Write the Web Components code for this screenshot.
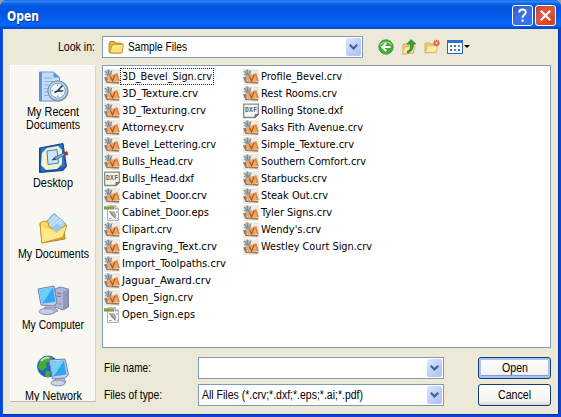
<!DOCTYPE html>
<html lang="en">
<head>
<meta charset="utf-8">
<title>Open</title>
<style>
html,body{margin:0;height:100%;overflow:hidden;background:#9a9e9c}
body{font:12px/14px "Liberation Sans",sans-serif;color:#000}
</style>
</head>
<body>
<open-dialog></open-dialog>
<script>
const define=(name,html,setup)=>customElements.define(name,class extends HTMLElement{
  connectedCallback(){
    if(this.shadowRoot)return;
    this.attachShadow({mode:'open'}).innerHTML=typeof html==='function'?html(this):html;
    if(setup)setup(this);
  }
});

// A single line of text, condensed or widened to an exact width.
define('fit-text','<style>:host{display:inline-block;white-space:pre}span{display:inline-block;transform-origin:0 50%}</style><span><slot></slot></span>',el=>{
  const w=+el.getAttribute('w'),s=el.shadowRoot.querySelector('span');
  const now=s.getBoundingClientRect().width;
  el.style.width=w+'px';
  s.style.transform=`scaleX(${w/now})`;
});

const icons={
folder:['0 0 16 16',`<path d="M1 4.5V13l1 1h11.5l1-1.5V5L13 4H8L6.5 2.5H2z" fill="#e7b53c" stroke="#a97e1c" stroke-width=".8"/><path d="M2 12.5 4 6.2 15.4 5.5 14.3 13 13 14H2.5z" fill="#fbe37b" stroke="#b78c25" stroke-width=".8"/><path d="M4.7 7.2 14 6.6" stroke="#fff8c4"/>`],
crv:['0 0 16 16',`<path d="M0 0h16v16H0z" fill="#efebe0"/><path d="M0 8.5 4 7.500l-.5 5 12 .5-1 1.700L2.500 14z" fill="#8f7d6a"/><path d="M2.500 7.500 13.300 4.200 15.700 12 5.500 13.500z" fill="#f3a461"/><path d="m13.300 4.200 2.400 7.800-1.500.200L11.500 4.800z" fill="#dd8847"/><path d="m6.300 7.500 2.300 4.300L11 5.800" fill="none" stroke="#a45a1e" stroke-width="1.200"/><path d="m.5 2.500 4 5.300 3.500-1.500L7.500 2 4.500.500z" fill="#b0b6b8"/><path d="m.8 2 3.700 4M4 .5l1 6M8 1.500 5.500 7M1 5.500l3 1" stroke="#6f7f88" stroke-width=".9"/>`],
dxf:['0 0 16 16',`<path d="M.7 1.200h14.600v10.300l-3.300 3H.7z" fill="#f3f3f0" stroke="#858989" stroke-width="1.300"/><path d="M12 14.500v-3h3.300z" fill="#999" stroke="#666"/><text x="2" y="8.800" font-size="6.300" font-weight="bold" textLength="12" font-family="Liberation Mono,monospace" fill="#626262">DXF</text>`],
eps:['0 0 16 16',`<path d="M3.500.700h7.800l3.200 3v11.800h-11z" fill="#fafafa" stroke="#999" stroke-width=".8"/><path d="M11 .700v3.100h3.500" fill="#ddd" stroke="#777" stroke-width=".7"/><path d="M0 1h10v3.600H0z" fill="#80a044"/><path d="M0 1.500h10" stroke="#a8bf72"/><path d="m5 6 5.500.500 2 4-1.500 3-3.500-3z" fill="#a8a8a8"/><path d="m5.500 6.500 6 7M5 13.500h2.500M13 6v2M13 13.500h.8" stroke="#777" stroke-width=".8"/>`],
back:['0 0 16 16',`<circle cx="8" cy="8" r="7.2" fill="#43ad39" stroke="#3c8c34" stroke-width=".8"/><path d="M2.5 6a6 5 0 0 1 11 0" fill="none" stroke="#9bdd86" stroke-width="1.2"/><path d="M8.2 4 4.2 8l4 4M4.5 8h8" fill="none" stroke="#fff" stroke-width="2"/>`],
up:['0 0 16 16',`<path d="M2 5h4l1 1h5l.5 8L2 15z" fill="#f1cf68" stroke="#c4a04a" stroke-width=".7"/><path d="m1.5 15 2-7 10.5-1-2 7z" fill="#fbea9f" stroke="#cda954" stroke-width=".7"/><path d="M6 12.500c3-1 4-3.500 3.400-7.500H6L10 .5 14.800 5h-2.600c.4 4.500-1.500 8-5.700 9z" fill="#35a634" stroke="#26762a" stroke-width=".7"/>`],
newf:['0 0 16 16',`<path d="M1 4h5l1 1h5v8L1 14z" fill="#f0ce69" stroke="#c9a453" stroke-width=".7"/><path d="m1.300 13.700 2-6.500 10.500-1-1.500 7z" fill="#fbeaa4" stroke="#cfab59" stroke-width=".7"/><path d="M12.500.8v6.400M9.300 4h6.400M10.200 1.700l4.600 4.600M14.800 1.700l-4.600 4.600" stroke="#e9502c" stroke-width="1.300"/><circle cx="12.500" cy="4" r="1.200" fill="#ffe6c0"/>`],
view:['0 0 16 14',`<path d="M.5.500h15v13H.5z" fill="#fff" stroke="#2465ad"/><path d="M0 0h16v3H0z" fill="#2c72bd"/><path d="M3 5h2v2H3zM11 5h2v2h-2zM7 9h2v2H7z" fill="#78828c"/><path d="M7 5h2v2H7zM3 9h2v2H3zM11 9h2v2h-2z" fill="#2d77b4"/>`],
recent:['0 0 32 32',`<path d="M2.500 1h14l6 5.500V30h-20z" fill="#c7dcf8" stroke="#6d9bd8"/><path d="M2 1h3v29H2z" fill="#5b93e0"/><path d="m16.500 1 6 5.500h-6z" fill="#5f93dd"/><path d="M7 7h8M7 10.500h9M7 14h5M7 17.500h4M7 21h4M7 24.500h4" stroke="#89afe2"/><circle cx="21" cy="20" r="10.600" fill="#7b95ae"/><circle cx="20.700" cy="19.700" r="9.700" fill="#c7d6e5" stroke="#708da9" stroke-width=".8"/><circle cx="20.700" cy="19.700" r="7.500" fill="#edf7fe" stroke="#7f9fbd"/><path d="M20.700 13.500v1.500M20.700 24.500v1.500M14.500 19.700H16M25 19.700h1.500" stroke="#678"/><path d="m25.500 14.500-5 5.500h5M20.500 20l-3 1.500" fill="none" stroke="#17304f" stroke-width="1.400"/>`],
desktop:['0 0 32 32',`<path d="M2.500 6 26 1.500l3.500 23-3.500 4-23.500 2z" fill="#1855ad" stroke="#174788"/><path d="m4 6.500 21-4 3 22.500-24 4z" fill="#2d77cf"/><path d="m10 6 11-2 4 4v14l-5 5-11 1-5-5 1-12z" fill="#f8f1ca"/><path d="m10 9 10-1.500L21.500 21 11 22.500z" fill="#cce6fb" stroke="#4383c8"/><path d="m15 18 3-3 10-4.500 1 2-10 5z" fill="#7eb3df" stroke="#315c8d" stroke-width=".8"/><path d="m27 11 3-1.500 1 3-3 1z" fill="#b73427" stroke="#842a25" stroke-width=".6"/><path d="m15 18.200 3-2.500 1 1.500z" fill="#20344d"/>`],
documents:['0 0 32 32',`<path d="m3 11 8-3 3 3 12-3 2 18L5 30z" fill="#dba936" stroke="#af8527"/><path d="m8 10 9-9.500L29 11 22 24 8 22z" fill="#a9d5f7" stroke="#5f9dd5"/><path d="m11 10 7-7M13 12l8-8M15 14l9-8M17 15l9-7" stroke="#c9e6fc" stroke-width="1.300"/><path d="M3 10 6 8l5 1 1 5 8 3 10-5-4 12L5 30z" fill="#f9d961" stroke="#c69a31"/><path d="m4 12 4 3 11 4 10-5-4 10L5.500 29z" fill="#ffe78c"/><path d="m15 14 6-4 3 6-5 4z" fill="#91c8ee" opacity=".85"/>`],
computer:['0 0 32 32',`<path d="m18 5 5-2 8.500 2v18L26 26l-8-3z" fill="#b1b5d3" stroke="#8085ac"/><path d="m26 8 5-2.500V23l-5 3z" fill="#9297bc"/><path d="m20 9 4 .7M20 12l4 .7" stroke="#6d7297"/><circle cx="23" cy="20" r="1" fill="#60a269"/><path d="M8 23 6 27l7 3 8-3-4-4z" fill="#bcc1dc" stroke="#858baf"/><ellipse cx="10" cy="27.500" rx="8" ry="3" fill="#c7cbe2" stroke="#888fb2"/><path d="m1 5 16-3 3 17-4 3-12-1z" fill="#c9cfe7" stroke="#787faa"/><path d="M2.500 6 16 3.500l2.500 14.500L5 19.500z" fill="#32a8f2"/><path d="M2.500 6 16 3.500 7 17l-2 2z" fill="#6ccefb"/>`],
network:['0 0 32 32',`<circle cx="11" cy="11.500" r="10.500" fill="#2362c5" stroke="#376cad"/><path d="M3 6 9 1l6 1-2 5-4 1 1 4-5 4-4-3zM9 15l5 2-2 5-4-1z" fill="#45ad36"/><path d="M4 6q3-4 8-3" fill="none" stroke="#b7e6a1" stroke-width="2"/><path d="m20 22-3 5 7 3 5-3-3-5z" fill="#bdc3dd" stroke="#858baf"/><ellipse cx="21" cy="28" rx="7" ry="2.800" fill="#d0d4e8" stroke="#888fb2"/><path d="m12 5 16-1 3.500 16-4 3-12 1z" fill="#cbd1e8" stroke="#747ca8"/><path d="m13.500 6.500 13.500-1 2.500 14L16 21.500z" fill="#32a4ec"/><path d="M13.500 6.500 27 5.500 19 18l-3 3z" fill="#73d0fa"/>`],
help:['0 0 21 21',`<path d="M7.200 7.500c0-4 6.600-4 6.600-.4 0 2.800-3.300 2.500-3.300 5.700" fill="none" stroke="#fff" stroke-width="2"/><path d="M9.500 14.500h2.200v2.200H9.500z" fill="#fff"/>`],
close:['0 0 21 21',`<path d="m5.800 5.800 9.400 9.400m0-9.400-9.400 9.400" stroke="#fff" stroke-width="2.200"/>`]
};
define('ui-icon',el=>{
  const [box,art]=icons[el.getAttribute('name')],w=el.getAttribute('w')||16,h=el.getAttribute('h')||w;
  return `<style>:host{display:block;flex:none;width:${w}px;height:${h}px}svg{display:block;width:100%;height:100%}</style><svg viewBox="${box}">${art}</svg>`;
});

define('caption-button',`<style>:host{display:block;box-sizing:border-box;width:21px;height:21px;border:1px solid #fff;border-radius:3px;background:radial-gradient(circle at 80% 90%,#2b77f4,#3d6de3 60%,#2c52c7);overflow:hidden}
:host([kind=close]){background:radial-gradient(circle at 80% 90%,#d8420e,#e0583b 60%,#c63d20)}::slotted(*){margin:-1px}</style><slot></slot>`);

define('title-bar',`<style>:host{display:flex;align-items:center;gap:2px;height:29px;box-sizing:border-box;padding:2px 5px 0 7px;
background:linear-gradient(#0453d4 0,#3c8ffa 1px,#237cf6 2px,#0761e9 4px,#0055e0 7px,#0056e5 14px,#0262f5 21px,#0468fe 25px,#0352dc 27px,#0144c4 29px)}
b{flex:1;font:bold 13.5px/16px "DejaVu Sans Condensed","DejaVu Sans",sans-serif;color:#fff;text-shadow:1px 1px 0 #0a2f8d}</style>
<b><fit-text w="32">Open</fit-text></b>
<caption-button kind="help"><ui-icon name="help" w="21"></ui-icon></caption-button>
<caption-button kind="close"><ui-icon name="close" w="21"></ui-icon></caption-button>`);

define('combo-box',`<style>:host{display:flex;box-sizing:border-box;align-items:center;height:22px;border:1px solid #7f9db9;background:#fff;padding:1px}
div{flex:1;display:flex;align-items:center;gap:4px;white-space:nowrap}
svg{flex:none;width:15px;height:18px;border-radius:2px;background:linear-gradient(135deg,#dce6fd,#bccdf9 60%,#adc2f5)}</style>
<div><slot></slot></div><svg viewBox="0 0 15 18"><path d="m3.800 6.800 3.700 3.700 3.700-3.700" fill="none" stroke="#44608c" stroke-width="2.200"/></svg>`);

define('push-button',`<style>:host{display:flex;align-items:center;justify-content:center;box-sizing:border-box;height:22px;border:1px solid #113d73;border-radius:3px;background:linear-gradient(#fff,#f4f3ee 80%,#dcd6cb)}
:host([default]){box-shadow:inset 0 0 0 2px #a9c3f2,inset 0 -3px 0 #7b9fe2}</style><slot></slot>`);

define('place-item',`<style>:host{display:flex;flex-direction:column;align-items:center;height:71px;box-sizing:border-box;padding-top:3px;line-height:13px}</style><slot name="icon"></slot><span style="height:3px"></span><slot></slot>`);

define('file-item',`<style>:host{display:flex;align-items:center;height:17px;font:11px/13px "DejaVu Sans Condensed","DejaVu Sans",sans-serif}
span{box-sizing:border-box;height:17px;padding:2px 0 1px 1.5px}:host([focused]) span{outline:1px dotted #222;outline-offset:-1px;padding-right:2px}</style>
<slot name="icon"></slot><span><slot></slot></span>`);

const files=[['3D_Bevel_Sign.crv',90],['3D_Texture.crv',76],['3D_Texturing.crv',84],['Attorney.crv',62],['Bevel_Lettering.crv',94],['Bulls_Head.crv',71],['Bulls_Head.dxf',72],['Cabinet_Door.crv',85],['Cabinet_Door.eps',87],['Clipart.crv',50],['Engraving_Text.crv',95],['Import_Toolpaths.crv',104],['Jaguar_Award.crv',89],['Open_Sign.crv',71],['Open_Sign.eps',73],
['Profile_Bevel.crv',81],['Rest Rooms.crv',76],['Rolling Stone.dxf',82],['Saks Fith Avenue.crv',102],['Simple_Texture.crv',93],['Southern Comfort.crv',105],['Starbucks.crv',66],['Steak Out.crv',67],['Tyler Signs.crv',71],["Wendy's.crv",60],['Westley Court Sign.crv',111]];
define('file-list',`<style>:host{display:grid;box-sizing:border-box;height:283px;border:1px solid #7f9db9;background:#fff;padding:2px 1px;grid-template-rows:repeat(15,17px);grid-auto-flow:column;grid-auto-columns:139px;align-content:start}</style>`+
files.map(([n,w],i)=>`<file-item${i?'':' focused'}><ui-icon slot="icon" name="${n.slice(-3)}"></ui-icon><fit-text w="${w}">${n}</fit-text></file-item>`).join(''));

const places=[['recent',['My Recent',52],['Documents',54]],['desktop',['Desktop',40]],['documents',['My Documents',71]],['computer',['My Computer',62]],['network',['My Network',57]]];
define('places-bar',`<style>:host{display:block;box-sizing:border-box;height:337px;overflow:hidden;background:#f8f7f2;border:1px solid #fff;border-right-color:#d8d5c7;border-bottom-color:#b8b7ac;padding-top:2px}</style>`+
places.map(([icon,...lines])=>`<place-item><ui-icon slot="icon" name="${icon}" w="32"></ui-icon>${lines.map(([t,w])=>`<fit-text w="${w}">${t}</fit-text>`).join('')}</place-item>`).join(''));

define('tool-bar',`<style>:host{display:flex;align-items:center;gap:7px;padding-left:15px}i{border:3px solid transparent;border-top-color:#000;border-bottom:0;margin-left:-6px}</style>
<ui-icon name="back"></ui-icon><ui-icon name="up"></ui-icon><ui-icon name="newf"></ui-icon><ui-icon name="view" w="16" h="14"></ui-icon><i></i>`);

define('open-dialog',`<style>
:host{display:flex;flex-direction:column;box-sizing:border-box;width:561px;height:417px;border-radius:7px 7px 0 0;overflow:hidden;background:#0b45d8}
main{flex:1;margin:0 3px 3px;background:#ece9d8;display:grid;grid-template:36px 283px 1fr/86px 449px;column-gap:6px;padding:0 0 0 7px;box-shadow:0 1px 0 #0831a8,1px 0 0 #0831a8,-1px 0 0 #1259ea}
.look{grid-column:1/3;display:grid;grid-template-columns:92px 261px auto;align-items:center;padding:0 0 1px}
.look>fit-text{justify-self:end;margin-right:7px}
places-bar{grid-row:2/4}
.form{display:grid;grid-template:22px 22px/96px 246px 34px 73px;row-gap:5px;padding-top:9px;justify-content:start}
.form>fit-text{align-self:center;padding-left:2px}.form push-button{grid-column:4}
</style>
<title-bar></title-bar>
<main>
<div class="look"><fit-text w="37">Look in:</fit-text><combo-box><ui-icon name="folder" style="margin-left:4px"></ui-icon><fit-text w="59">Sample Files</fit-text></combo-box><tool-bar></tool-bar></div>
<places-bar></places-bar>
<file-list></file-list>
<div class="form">
<fit-text w="47">File name:</fit-text><combo-box></combo-box><push-button default><fit-text w="26">Open</fit-text></push-button>
<fit-text w="58">Files of type:</fit-text><combo-box><fit-text w="161" style="margin-left:2px">All Files (*.crv;*.dxf;*.eps;*.ai;*.pdf)</fit-text></combo-box><push-button><fit-text w="33">Cancel</fit-text></push-button>
</div>
</main>`);
</script>
</body>
</html>
